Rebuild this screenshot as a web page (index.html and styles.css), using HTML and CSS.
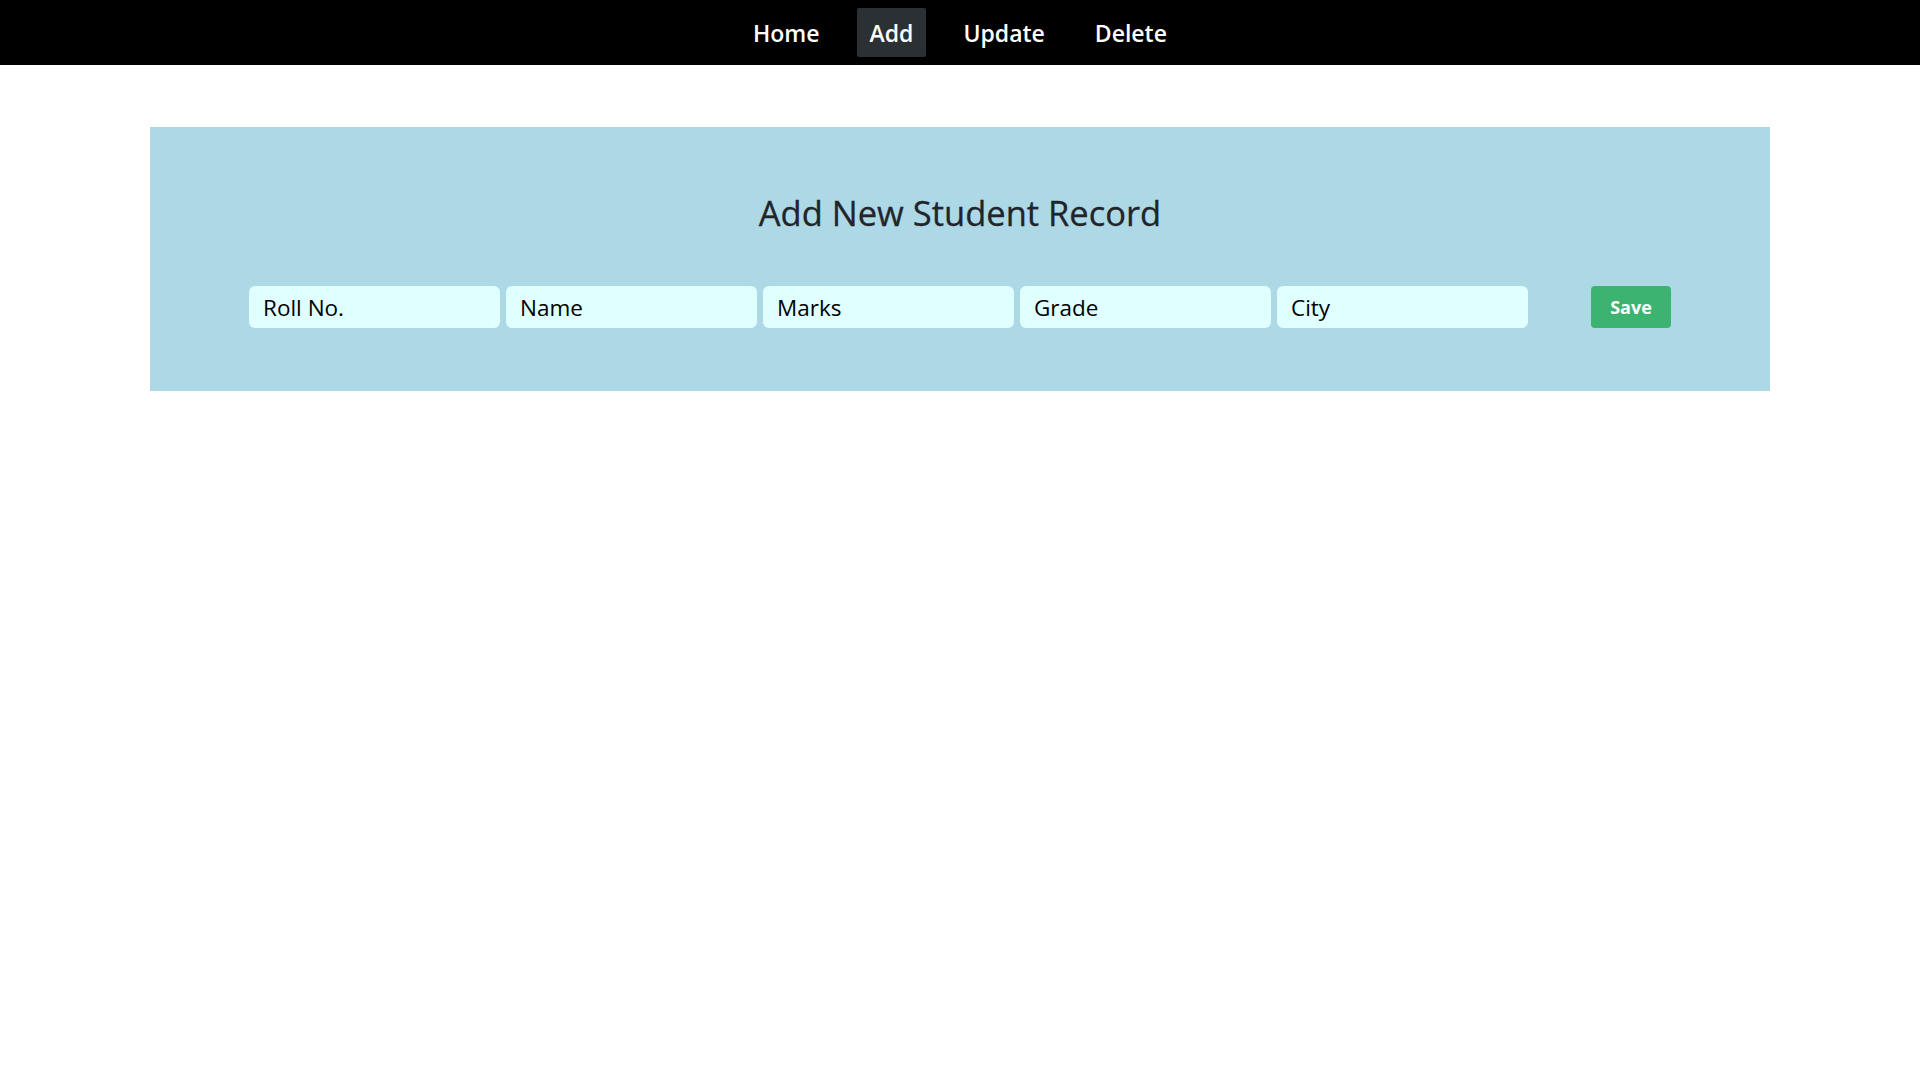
FILE: index.html
```html
<!DOCTYPE html>
<html lang="en">
<head>
<meta charset="utf-8">
<title>Add Student</title>
<link rel="stylesheet" href="styles.css">
</head>
<body>
<nav class="topnav">
  <a class="nav-link" href="#">Home</a>
  <a class="nav-link active" href="#">Add</a>
  <a class="nav-link" href="#">Update</a>
  <a class="nav-link" href="#">Delete</a>
</nav>
<main class="panel">
  <h1 class="panel-title">Add New Student Record</h1>
  <form class="form-row">
    <div class="fields">
      <input class="field" type="text" placeholder="Roll No.">
      <input class="field" type="text" placeholder="Name">
      <input class="field" type="text" placeholder="Marks">
      <input class="field" type="text" placeholder="Grade">
      <input class="field" type="text" placeholder="City">
    </div>
    <button class="save-btn" type="button">Save</button>
  </form>
</main>
</body>
</html>
```
FILE: styles.css
```css
* { box-sizing: border-box; }
body {
  margin: 0;
  background: #fff;
  font-family: "Open Sans", "Noto Sans", sans-serif;
  color: #212529;
}
.topnav {
  height: 65px;
  background: #000;
  display: flex;
  justify-content: center;
  align-items: center;
  gap: 24px;
}
.nav-link {
  color: #fff;
  text-decoration: none;
  font-weight: 600;
  font-size: 23px;
  height: 49px;
  display: flex;
  align-items: center;
  padding: 0 13px;
  border-radius: 2px;
}
.nav-link.active { background: #2b3035; }
.panel {
  margin: 62px 150px 0;
  background: #add8e6;
  height: 264px;
  display: flex;
  flex-direction: column;
  align-items: center;
  padding-top: 63px;
}
.panel-title {
  margin: 0;
  font-size: 34.5px;
  font-weight: 500;
  line-height: 46px;
  color: #212529;
  -webkit-text-stroke: 0.3px #212529;
}
.form-row {
  margin-top: 50px;
  display: flex;
  align-items: center;
}
.fields { display: flex; gap: 6px; }
.field {
  width: 251px;
  height: 42px;
  border: none;
  border-radius: 6px;
  background: #e0ffff;
  padding: 0 14px;
  font-family: "Open Sans", "Noto Sans", sans-serif;
  font-size: 22.5px;
  color: #000;
  outline: none;
}
.field::placeholder { color: #000; opacity: 1; }
.save-btn {
  margin-left: 63px;
  width: 80px;
  height: 42px;
  border: none;
  border-radius: 4px;
  background: #3cb371;
  color: #fff;
  font-family: "Open Sans", "Noto Sans", sans-serif;
  font-weight: 700;
  font-size: 18px;
  padding: 0;
}
```
